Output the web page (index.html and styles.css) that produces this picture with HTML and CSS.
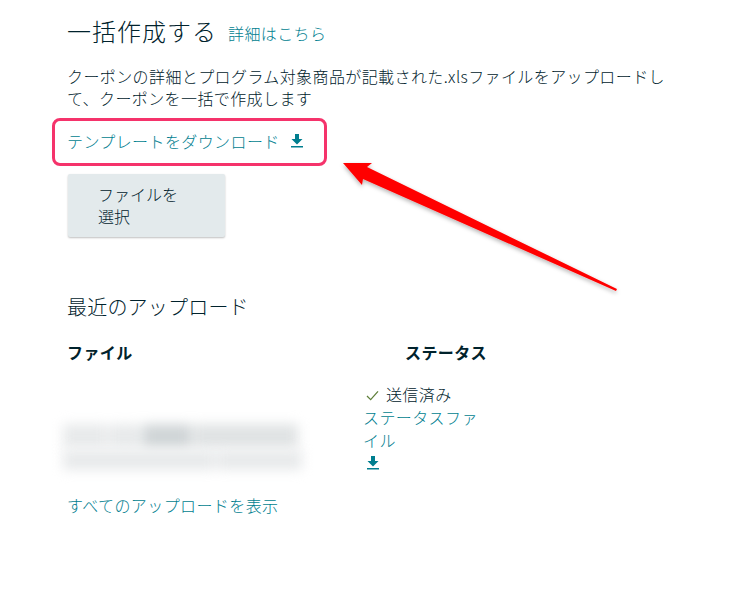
FILE: index.html
```html
<!DOCTYPE html>
<html lang="ja">
<head>
  <meta charset="UTF-8">
  <title>一括作成する</title>
  <link rel="stylesheet" href="styles.css">
</head>
<body>
  <div class="page">
    <div class="title-row">
      <h1>一括作成する</h1>
      <a class="link" href="#">詳細はこちら</a>
    </div>
    <p class="desc">クーポンの詳細とプログラム対象商品が記載された.xlsファイルをアップロードして、クーポンを一括で作成します</p>

    <div class="template">
      <a class="link" href="#">テンプレートをダウンロード</a>
      <svg class="dl-icon" viewBox="0 0 12 14"><path d="M4 0h4v5h3.500L6 10.500.5 5H4zM0 12h12v1.600H0z"/></svg>
    </div>

    <button class="file-btn">ファイルを<br>選択</button>

    <h2>最近のアップロード</h2>

    <div class="uploads">
      <div class="head-file">ファイル</div>
      <div class="head-status">ステータス</div>
      <div class="file-name">
        <div class="blur-row">
          <span class="blot b1"></span>
          <span class="blot b2"></span>
          <span class="blot b3"></span>
          <span class="blot b4"></span>
        </div>
        <div class="blur-row">
          <span class="blot b5"></span>
          <span class="blot b6"></span>
        </div>
      </div>
      <div class="status">
        <div class="sent">
          <svg class="check" viewBox="0 0 14 12"><path d="M1 6.500l4 4L13 1.500"/></svg>
          送信済み
        </div>
        <a class="link" href="#">ステータスファイル</a>
        <svg class="dl-icon small" viewBox="0 0 12 14"><path d="M4 0h4v5h3.500L6 10.500.5 5H4zM0 12h12v1.600H0z"/></svg>
      </div>
    </div>

    <a class="link all" href="#">すべてのアップロードを表示</a>
  </div>

  <svg class="arrow" viewBox="0 0 734 600">
    <defs>
      <filter id="arrow-shadow" x="-10%" y="-10%" width="120%" height="130%">
        <feDropShadow dx="0" dy="2" stdDeviation="2" flood-color="#000" flood-opacity="0.3"/>
      </filter>
    </defs>
    <polygon points="343,163 372,163 367,167 617,289 616,291 363,179 362,185" fill="#ff0000" filter="url(#arrow-shadow)"/>
  </svg>
</body>
</html>
```

FILE: styles.css
```css
body {
  margin: 0;
  background: #fff;
  color: #00222c;
  font-family: "Noto Sans CJK JP", "Noto Sans", sans-serif;
  font-size: 16px;
  font-weight: 300;
  line-height: 22px;
  letter-spacing: 0.4px;
  overflow: hidden;
}

.page {
  width: 604px;
  padding: 14px 0 0 67px;
}

.title-row {
  display: flex;
  align-items: baseline;
  gap: 11px;
}

h1 {
  margin: 0;
  font-size: 24px;
  font-weight: 300;
  line-height: 34px;
  letter-spacing: 1px;
}

.link {
  color: #007e8f;
  text-decoration: none;
}

.title-row .link {
  position: relative;
  top: -1px;
}

.desc {
  margin: 17px 0 0;
}

.template {
  display: flex;
  align-items: center;
  gap: 11px;
  width: 275px;
  height: 48px;
  box-sizing: border-box;
  margin: 9px 0 0 -15px;
  padding: 0 0 2px 12px;
  border: 3px solid #f5336b;
  border-radius: 8px;
}

.dl-icon {
  width: 12px;
  height: 14px;
  fill: #007e8f;
}

.dl-icon.small {
  display: block;
  margin: 4px 0 0 4px;
}

.file-btn {
  display: block;
  width: 157px;
  height: 63px;
  margin: 8px 0 0 1px;
  padding: 0 0 2px 30px;
  border: none;
  border-radius: 2px;
  background: #e3eaec;
  box-shadow: 0 1px 2px rgba(0, 0, 0, 0.25);
  color: #00222c;
  font: inherit;
  text-align: left;
}

h2 {
  margin: 56px 0 0;
  font-size: 20px;
  font-weight: 300;
  line-height: 28px;
  letter-spacing: 0.2px;
}

.uploads {
  display: grid;
  grid-template-columns: 296px 124px;
  margin-top: 20px;
}

.head-file, .head-status {
  font-weight: 700;
}

.head-status {
  text-align: right;
}

.file-name {
  display: flex;
  flex-direction: column;
  justify-content: flex-end;
  gap: 2px;
  margin-left: -4px;
}

.blur-row {
  display: flex;
  gap: 2px;
  filter: blur(6px);
}

.blot {
  height: 24px;
  background: #e8eaeb;
}

.b1 { width: 44px; }
.b2 { width: 32px; }
.b3 { width: 48px; background: #d0d5d7; }
.b4 { width: 105px; background: #e0e3e4; }
.b5 { width: 152px; height: 20px; }
.b6 { width: 85px; height: 20px; }

.status {
  margin-top: 20px;
  width: 116px;
  line-height: 23px;
}

.sent {
  padding-left: 3px;
}

.check {
  width: 13px;
  height: 11px;
  margin-right: 3px;
  fill: none;
  stroke: #5f7f3a;
  stroke-width: 1.400;
}

.all {
  display: block;
  margin-top: 24px;
}

.arrow {
  position: absolute;
  left: 0;
  top: 0;
  width: 734px;
  height: 600px;
  pointer-events: none;
}
```
